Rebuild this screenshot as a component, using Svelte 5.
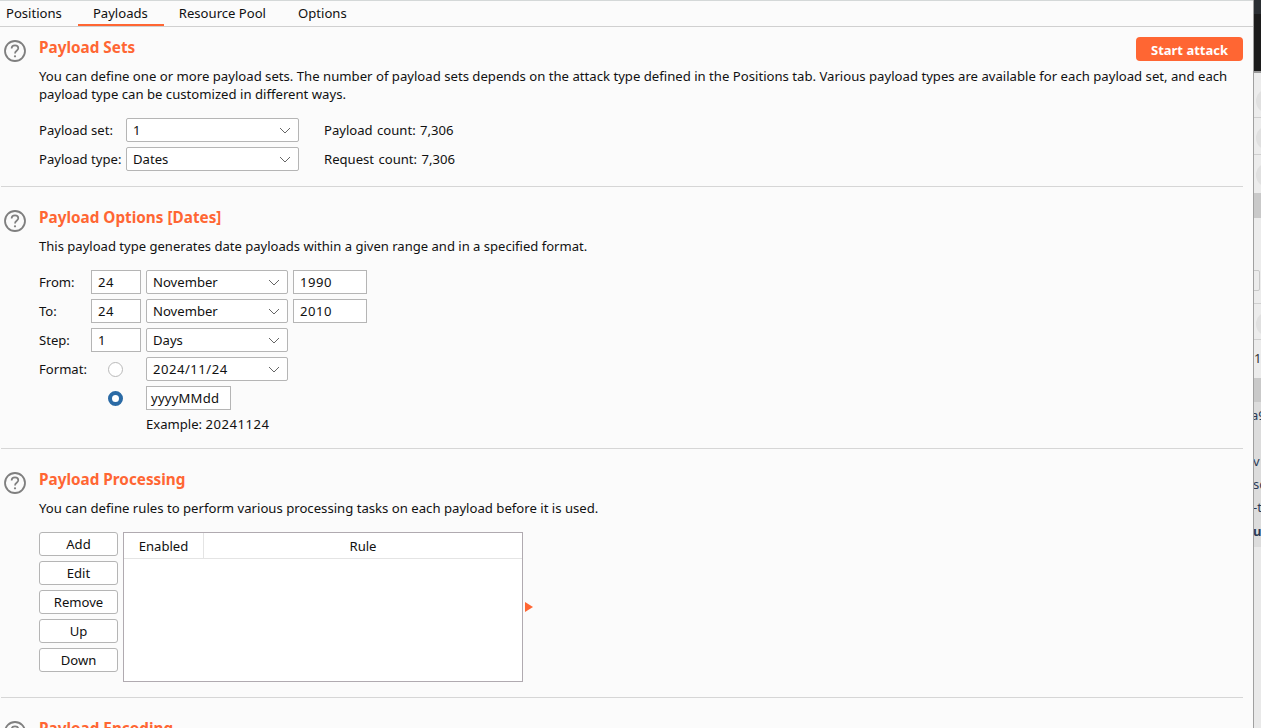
<script>
  const tabs = ["Positions", "Payloads", "Resource Pool", "Options"];
  const ruleButtons = ["Add", "Edit", "Remove", "Up", "Down"];
</script>

{#snippet help()}
  <svg class="help" width="24" height="24" viewBox="0 0 24 24" aria-hidden="true">
    <circle cx="12" cy="12" r="10" fill="none" stroke="#7f7f7f" stroke-width="1.8" />
    <path d="M8.600 9.600c0-2 1.500-3.200 3.400-3.200s3.300 1.200 3.300 2.900c0 2.500-3.300 2.500-3.300 5.100" fill="none" stroke="#7f7f7f" stroke-width="1.700" />
    <circle cx="12" cy="17.300" r="1.100" fill="#7f7f7f" />
  </svg>
{/snippet}

{#snippet select(value, cls)}
  <div class="select {cls}">
    <span>{value}</span>
    <svg width="12" height="7" viewBox="0 0 12 7" aria-hidden="true"><path d="M1 1l5 5 5-5" fill="none" stroke="#666" stroke-width="1" /></svg>
  </div>
{/snippet}

<div class="window">
  <main class="panel">
    <nav class="tabs">
      {#each tabs as tab}
        <button type="button" class="tab" class:active={tab === "Payloads"}>{tab}</button>
      {/each}
    </nav>

    <section class="section first">
      {@render help()}
      <div class="body">
        <div class="title-row">
          <h2>Payload Sets</h2>
          <button type="button" class="start">Start attack</button>
        </div>
        <p>You can define one or more payload sets. The number of payload sets depends on the attack type defined in the Positions tab. Various payload types are available for each payload set, and each payload type can be customized in different ways.</p>
        <div class="sets">
          <span>Payload set:</span>
          {@render select("1", "wide")}
          <span class="count">Payload count: 7,306</span>
          <span>Payload type:</span>
          {@render select("Dates", "wide")}
          <span class="count">Request count: 7,306</span>
        </div>
      </div>
    </section>

    <section class="section options">
      {@render help()}
      <div class="body">
        <h2>Payload Options [Dates]</h2>
        <p>This payload type generates date payloads within a given range and in a specified format.</p>
        <div class="dates">
          <span>From:</span>
          <div class="input day num">24</div>
          {@render select("November", "mid")}
          <div class="input year num">1990</div>

          <span>To:</span>
          <div class="input day num">24</div>
          {@render select("November", "mid")}
          <div class="input year num">2010</div>

          <span>Step:</span>
          <div class="input day">1</div>
          {@render select("Days", "mid")}
          <i></i>

          <span>Format:</span>
          <div class="radio-cell"><span class="radio"></span></div>
          {@render select("2024/11/24", "mid num")}
          <i></i>

          <i></i>
          <div class="radio-cell"><span class="radio on"></span></div>
          <div class="input pattern">yyyyMMdd</div>
          <i></i>

          <i></i>
          <i></i>
          <span class="example">Example: <span class="num">20241124</span></span>
        </div>
      </div>
    </section>

    <section class="section processing">
      {@render help()}
      <div class="body">
        <h2>Payload Processing</h2>
        <p>You can define rules to perform various processing tasks on each payload before it is used.</p>
        <div class="rules">
          <div class="buttons">
            {#each ruleButtons as label}
              <button type="button" class="btn">{label}</button>
            {/each}
          </div>
          <div class="table">
            <div class="thead">
              <div class="th enabled">Enabled</div>
              <div class="th rule">Rule</div>
            </div>
          </div>
          <svg class="marker" width="8" height="10" viewBox="0 0 8 10" aria-hidden="true"><path d="M0 0l8 5-8 5z" fill="#ff6633" /></svg>
        </div>
      </div>
    </section>

    <section class="section encoding">
      {@render help()}
      <div class="body">
        <h2>Payload Encoding</h2>
      </div>
    </section>
  </main>

  <!-- the window behind, mostly hidden -->
  <aside class="behind">
    <div class="dark"></div>
    <div class="row r1"><b class="blob"></b></div>
    <div class="row r2"><b class="blob"></b></div>
    <div class="row r3"><b class="blob"></b></div>
    <div class="band b1"></div>
    <div class="row r4"><b class="box"></b></div>
    <div class="row r5"><b class="blob"></b></div>
    <div class="row r6"><span>1</span></div>
    <div class="band b2"></div>
    <div class="list">
      <span class="l1">a9</span>
      <span class="l2">v</span>
      <span class="l3">sc</span>
      <span class="l4">-t</span>
      <span class="l5">u</span>
    </div>
  </aside>
</div>

<style>
  :global(body) {
    margin: 0;
    overflow: hidden;
  }

  .window {
    display: flex;
    width: 1261px;
    height: 728px;
    overflow: hidden;
    font: 13.1px/18px "Noto Sans", "Open Sans", sans-serif;
    color: #111;
    background: #fbfbfb;
  }

  .panel {
    width: 1253px;
    flex: none;
    border-top: 1px solid #d4d8d8;
    box-sizing: border-box;
  }

  .behind {
    flex: 1;
    min-width: 0;
    overflow: hidden;
    border-left: 1px solid #a0a0a0;
    background: #e9e9e9;
  }

  .dark {
    height: 71px;
    background: linear-gradient(#2b2f33 14px, #1c1c1c 14px);
    border-bottom: 2px solid #999;
  }

  .row {
    position: relative;
    box-sizing: border-box;
    border-bottom: 1px solid #cfcfcf;
    background: #ececec;
    overflow: hidden;
  }

  .r1 { height: 45px; }
  .r2 { height: 37px; }
  .r3 { height: 38px; border-bottom: none; }
  .r4 { height: 86px; }
  .r5 { height: 36px; }
  .r6 { height: 38px; border-bottom: none; font-size: 13px; color: #333; line-height: 36px; }

  .blob {
    position: absolute;
    left: 2px;
    top: 8px;
    width: 24px;
    height: 24px;
    border-radius: 50%;
    background: #e0e0e0;
  }

  .r1 .blob {
    top: 16px;
  }

  .box {
    position: absolute;
    left: -10px;
    top: 52px;
    width: 14px;
    height: 19px;
    border: 1px solid #c8c8c8;
    border-radius: 2px;
  }

  .band {
    background: #c9c9c9;
  }

  .b1 { height: 25px; }
  .b2 { height: 24px; }

  .list {
    position: relative;
    height: 145px;
    background: #dcdcdc;
    font-size: 13px;
    color: #2b3a55;
  }

  .list span {
    position: absolute;
    left: 0;
    line-height: 18px;
    white-space: nowrap;
  }

  .l1 { top: 4px; margin-left: -3px; }
  .l2 { top: 50px; margin-left: -1px; }
  .l3 { top: 73px; margin-left: -1px; }
  .l4 { top: 96px; margin-left: -1px; }
  .l5 { top: 120px; margin-left: -1px; font-weight: 700; }

  .tabs {
    display: flex;
    height: 25px;
    border-bottom: 1px solid #d0d0d0;
  }

  .tab {
    box-sizing: border-box;
    height: 25px;
    padding: 0 16px 0 15px;
    border: none;
    border-bottom: 2px solid transparent;
    background: none;
    font: inherit;
    color: inherit;
    white-space: nowrap;
  }

  .tab:first-child {
    padding: 0 16px 0 6px;
  }

  .tab:nth-child(3) {
    padding-right: 17px;
  }

  .tab.active {
    border-bottom-color: #ff6633;
  }

  .section {
    display: flex;
    width: 1242px;
    box-sizing: border-box;
    border-bottom: 1px solid #d6d6d6;
    margin-left: 1px;
  }

  .first { height: 160px; padding-top: 10px; }
  .options { height: 262px; padding-top: 20px; }
  .processing { height: 249px; padding-top: 20px; }
  .encoding { border-bottom: none; padding-top: 20px; }

  .help {
    flex: none;
    margin: 2px 0 0 2px;
  }

  .body {
    flex: 1;
    margin-left: 12px;
    min-width: 0;
  }

  .title-row {
    display: flex;
    justify-content: space-between;
  }

  h2 {
    margin: 0;
    font-size: 15.3px;
    line-height: 20px;
    font-weight: 700;
    color: #ff6633;
  }

  p {
    margin: 10px 0 0;
    font-size: 13.15px;
  }

  .options p {
    font-size: 13.05px;
  }

  .start {
    width: 107px;
    height: 24px;
    border: none;
    border-radius: 4px;
    background: #ff6633;
    color: #fff;
    font: 700 13px/24px "Noto Sans", sans-serif;
  }

  .first p {
    margin-top: 6px;
  }

  .sets {
    display: grid;
    grid-template-columns: 87px 173px auto;
    row-gap: 5px;
    align-items: center;
    justify-items: start;
    margin-top: 15px;
  }

  .count {
    margin-left: 25px;
    word-spacing: 1px;
  }

  .select, .input {
    display: flex;
    align-items: center;
    box-sizing: border-box;
    height: 24px;
    background: #fff;
    border: 1px solid #b5b5b5;
    white-space: nowrap;
  }

  .select {
    justify-content: space-between;
    padding: 0 7px 0 6px;
    border-radius: 2px;
  }

  .input {
    padding: 0 6px;
  }

  .wide { width: 173px; }
  .mid { width: 142px; }

  .num {
    letter-spacing: 0.5px;
  }

  .dates {
    display: grid;
    grid-template-columns: 52px 55px 147px auto;
    row-gap: 5px;
    align-items: center;
    justify-items: start;
    margin-top: 15px;
  }

  .day { width: 50px; }
  .year { width: 74px; }
  .pattern { width: 85px; padding: 0 4px; letter-spacing: 0.2px; }

  .radio-cell {
    display: flex;
    padding-left: 17px;
  }

  .radio {
    box-sizing: border-box;
    width: 15px;
    height: 15px;
    border: 1px solid #b9b9b9;
    border-radius: 50%;
    background: #fff;
  }

  .radio.on {
    border: 4px solid #2a6aa5;
  }

  .example {
    grid-column: 3 / 5;
    margin-top: 0;
  }

  .rules {
    position: relative;
    display: flex;
    gap: 5px;
    margin-top: 15px;
  }

  .buttons {
    display: flex;
    flex-direction: column;
    gap: 5px;
  }

  .btn {
    width: 79px;
    height: 24px;
    padding: 0;
    border: 1px solid #b5b5b5;
    border-radius: 3px;
    background: #fff;
    font: inherit;
    color: inherit;
  }

  .table {
    width: 400px;
    height: 150px;
    box-sizing: border-box;
    border: 1px solid #b0aab0;
    background: #fff;
  }

  .thead {
    display: flex;
    box-sizing: border-box;
    height: 26px;
    border-bottom: 1px solid #e4e4e4;
    line-height: 26px;
    text-align: center;
  }

  .enabled {
    width: 79px;
    border-right: 1px solid #e4e4e4;
  }

  .rule {
    flex: 1;
  }

  .marker {
    position: absolute;
    left: 486px;
    top: 70px;
  }
</style>
